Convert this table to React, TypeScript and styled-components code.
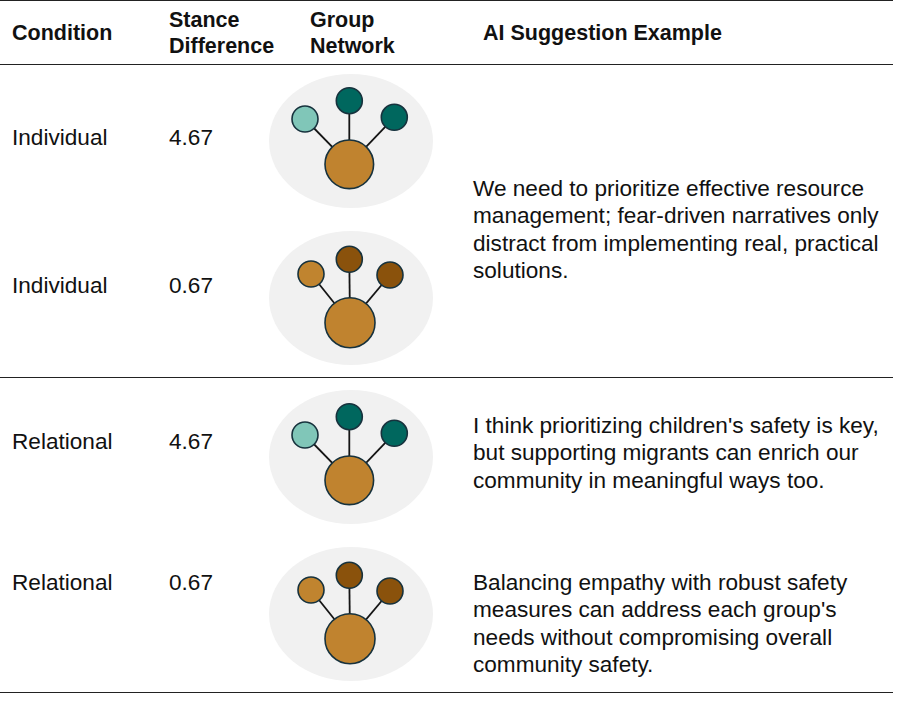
import React from 'react'
import styled, { createGlobalStyle } from 'styled-components'

const GlobalStyle = createGlobalStyle`
  body {
    margin: 0;
    background: #ffffff;
    font-family: 'Liberation Sans', Arial, Helvetica, sans-serif;
    color: #111111;
  }
`

const COLS = '157px 103px 201px 1fr'

const Table = styled.div`
  width: 893px;
  border-top: 1.5px solid #222;
`

const HeaderRow = styled.div`
  display: grid;
  grid-template-columns: ${COLS};
  align-items: center;
  padding: 6px 0 5px;
  border-bottom: 1.5px solid #222;
`

const HeadCell = styled.div<{ $pad?: number }>`
  padding-left: ${(p) => p.$pad ?? 12}px;
  font-size: 21.5px;
  font-weight: bold;
  line-height: 26px;
`

const Group = styled.div`
  border-bottom: 1.5px solid #222;
  display: grid;
  grid-template-columns: ${COLS};
`

const Row = styled.div<{ $h: number; $row: number }>`
  display: grid;
  grid-template-columns: subgrid;
  grid-column: 1 / 5;
  grid-row: ${(p) => p.$row};
  height: ${(p) => p.$h}px;
  align-items: start;
`

const Cell = styled.div<{ $top: number; $pad?: number }>`
  padding-top: ${(p) => p.$top}px;
  padding-left: ${(p) => p.$pad ?? 12}px;
  font-size: 22.6px;
  line-height: 27px;
`

const NetCell = styled.div<{ $top: number }>`
  padding-top: ${(p) => p.$top}px;
  padding-left: 9px;
  line-height: 0;
`

const Suggestion = styled.div<{ $top: number }>`
  padding-top: ${(p) => p.$top}px;
  padding-left: 12px;
  font-size: 22.6px;
  line-height: 27.3px;
`

const SpanSuggestion = styled(Suggestion)`
  grid-column: 4;
  grid-row: 1 / 3;
`

type Variant = 'teal' | 'brown'

const palettes = {
  teal: { left: '#80c6b8', top: '#00675e', right: '#00675e' },
  brown: { left: '#c0842f', top: '#8a520c', right: '#8a520c' },
}

const layouts = {
  teal: { left: [36, 45], top: [80.3, 26.7], right: [125.3, 43.3], big: [80.3, 90.3], br: 24.3 },
  brown: { left: [42, 43], top: [80.3, 28.3], right: [121, 44], big: [81, 91.7], br: 25 },
}

function Network({ variant }: { variant: Variant }) {
  const c = palettes[variant]
  const l = layouts[variant]
  const small = [
    { p: l.left, fill: c.left },
    { p: l.top, fill: c.top },
    { p: l.right, fill: c.right },
  ]
  return (
    <svg width="164" height="134" viewBox="0 0 164 134">
      <ellipse cx="82" cy="67" rx="82" ry="67" fill="#f1f1f1" />
      {small.map((s, i) => (
        <line key={'l' + i} x1={s.p[0]} y1={s.p[1]} x2={l.big[0]} y2={l.big[1]} stroke="#151515" strokeWidth="1.8" />
      ))}
      {small.map((s, i) => (
        <circle key={'c' + i} cx={s.p[0]} cy={s.p[1]} r="13" fill={s.fill} stroke="#17323d" strokeWidth="1.6" />
      ))}
      <circle cx={l.big[0]} cy={l.big[1]} r={l.br} fill="#c0832f" stroke="#17323d" strokeWidth="1.6" />
    </svg>
  )
}

export default function App() {
  return (
    <>
      <GlobalStyle />
      <Table>
        <HeaderRow>
          <HeadCell>Condition</HeadCell>
          <HeadCell>Stance<br />Difference</HeadCell>
          <HeadCell $pad={50}>Group<br />Network</HeadCell>
          <HeadCell $pad={22}>AI Suggestion Example</HeadCell>
        </HeaderRow>

        <Group>
          <Row $row={1} $h={155}>
            <Cell $top={59}>Individual</Cell>
            <Cell $top={59}>4.67</Cell>
            <NetCell $top={9}><Network variant="teal" /></NetCell>
          </Row>
          <Row $row={2} $h={157}>
            <Cell $top={52}>Individual</Cell>
            <Cell $top={52}>0.67</Cell>
            <NetCell $top={11}><Network variant="brown" /></NetCell>
          </Row>
          <SpanSuggestion $top={110}>
            We need to prioritize effective resource management; fear-driven narratives only distract from implementing real, practical solutions.
          </SpanSuggestion>
        </Group>

        <Group>
          <Row $row={1} $h={156}>
            <Cell $top={50}>Relational</Cell>
            <Cell $top={50}>4.67</Cell>
            <NetCell $top={12}><Network variant="teal" /></NetCell>
            <Suggestion $top={34}>
              I think prioritizing children's safety is key, but supporting migrants can enrich our community in meaningful ways too.
            </Suggestion>
          </Row>
          <Row $row={2} $h={158}>
            <Cell $top={35}>Relational</Cell>
            <Cell $top={35}>0.67</Cell>
            <NetCell $top={13}><Network variant="brown" /></NetCell>
            <Suggestion $top={35}>
              Balancing empathy with robust safety measures can address each group's needs without compromising overall community safety.
            </Suggestion>
          </Row>
        </Group>
      </Table>
    </>
  )
}
